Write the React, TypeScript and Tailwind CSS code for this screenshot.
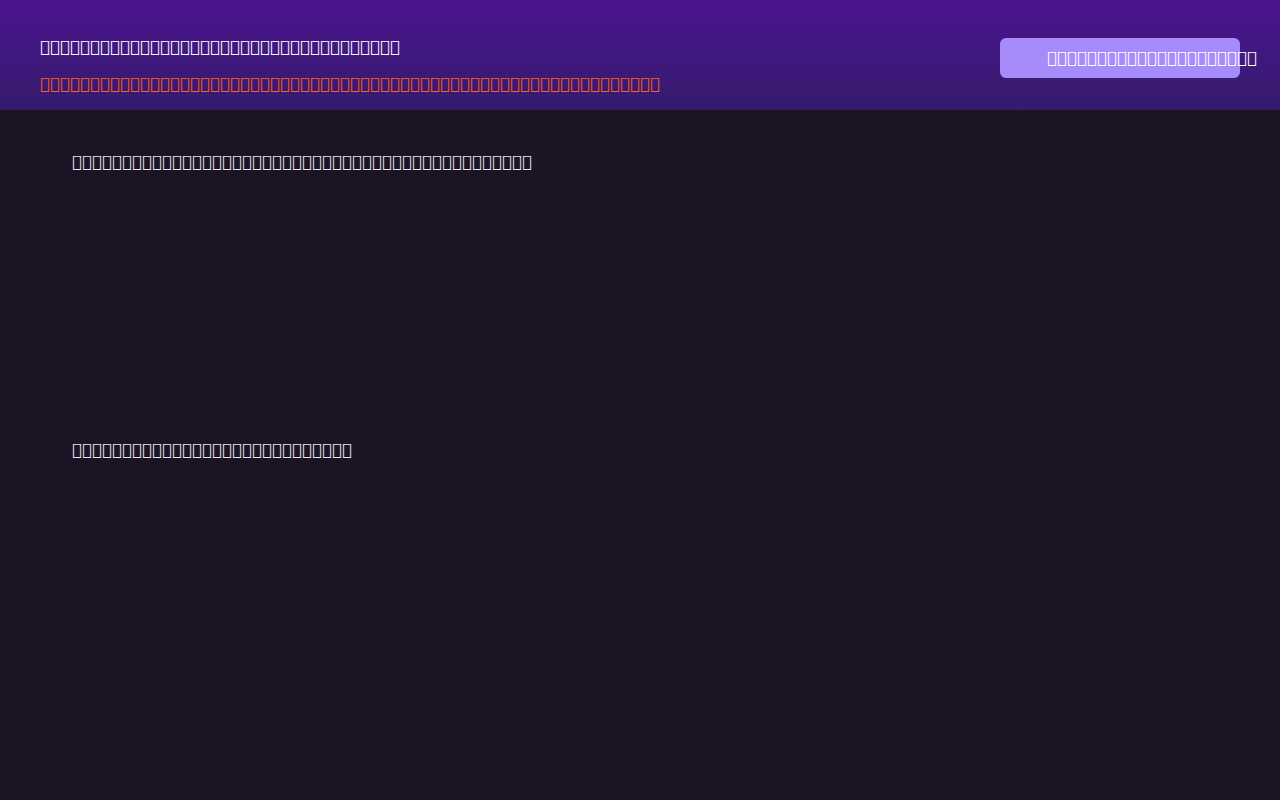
import React from 'react';

// the reference text is in glyphs no installed font carries; private-use chars give the same boxes
const box = (n: number) => '\uE000'.repeat(n);

const title = box(36);
const error = box(62);
const action = box(21);
const intro = box(46);
const empty = box(28);

export default function App() {
  return (
    <div className="min-h-screen bg-[#1c1424] font-['DejaVu_Sans',sans-serif] text-base leading-5 tracking-[0.4px]">
      <header className="h-[110px] bg-gradient-to-b from-[#4c1290] to-[#341b6c] flex items-start justify-between pl-10 pr-10 pt-[37px]">
        <div>
          <p className="text-white whitespace-nowrap">{title}</p>
          <p className="mt-[17px] text-[#ff6020] whitespace-nowrap">{error}</p>
        </div>
        <button className="mt-px w-[240px] h-10 shrink-0 rounded-md bg-[#a78bfa] text-white text-left pl-[47px] pb-px whitespace-nowrap">
          {action}
        </button>
      </header>

      <main className="px-[72px] pt-[42px] text-[#ebe6f0]">
        <section className="h-[288px]">
          <p className="whitespace-nowrap">{intro}</p>
        </section>
        <section>
          <p className="whitespace-nowrap">{empty}</p>
        </section>
      </main>
    </div>
  );
}
